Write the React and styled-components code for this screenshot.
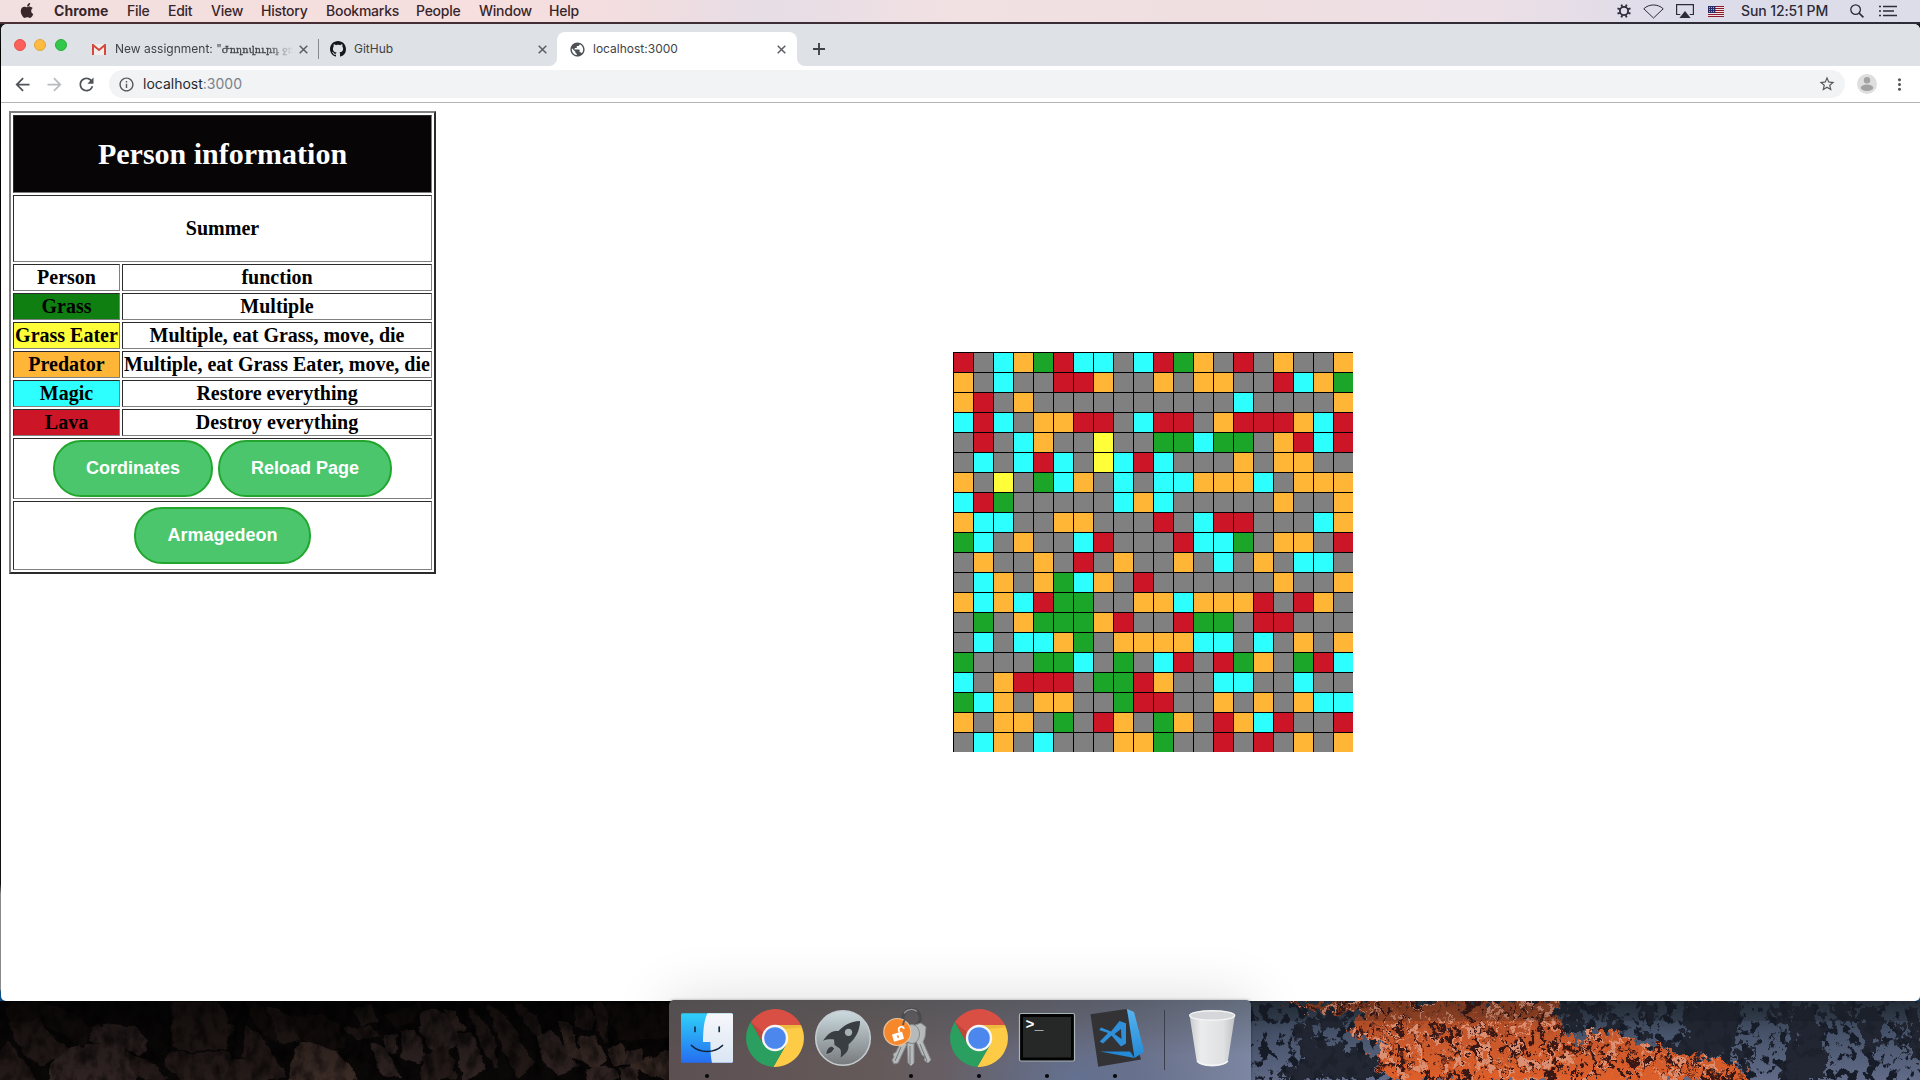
import React from "react";
import styled, { createGlobalStyle } from "styled-components";
import { FaApple } from "react-icons/fa";
import {
  MdArrowBack,
  MdArrowForward,
  MdInfoOutline,
  MdMoreVert,
  MdPublic,
  MdRefresh,
  MdStarBorder,
} from "react-icons/md";

const GlobalStyle = createGlobalStyle`
  * { box-sizing: border-box; }
  body { margin: 0; background: #050404; overflow: hidden; }
`;

const Desktop = styled.div`
  width: 1920px;
  height: 1080px;
  display: flex;
  flex-direction: column;
  position: relative;
  background: linear-gradient(90deg, #4a3035, #3a2c34 50%, #2a2c38);
  font-family: Inter, Roboto, "Liberation Sans", sans-serif;
`;

/* ---------- macOS menu bar ---------- */

const MenuBar = styled.header`
  height: 22px;
  flex: none;
  display: flex;
  align-items: center;
  justify-content: space-between;
  background: linear-gradient(90deg, #f2dfdf 0%, #f6dfde 25%, #f2dde0 33%, #e6dde5 40%, #f2e1e3 50%, #f0dfe0 62%, #ecdfe6 78%, #dcdcea 88%, #dcdde9 100%);
  color: #38262b;
`;

const MenuGroup = styled.nav`
  display: flex;
  align-items: center;
  height: 22px;
`;

const AppleMark = styled(FaApple)`
  width: 14px;
  height: 17px;
  margin: 0 20px 2px 20px;
`;

const MenuItem = styled.span`
  width: ${(p) => p.$width}px;
  font-size: 14px;
  line-height: 22px;
  font-weight: ${(p) => (p.$bold ? 700 : 500)};
  letter-spacing: ${(p) => (p.$bold ? 0.05 : -0.25)}px;
  white-space: nowrap;
`;

const StatusIcon = styled.svg`
  width: ${(p) => p.$w}px;
  height: ${(p) => p.$h}px;
  margin-right: ${(p) => p.$gap}px;
  flex: none;
  color: #2e2a38;
`;

const Clock = styled.span`
  width: 109px;
  font-size: 14px;
  font-weight: 500;
  letter-spacing: -0.1px;
  line-height: 22px;
  white-space: nowrap;
  color: #2e2a36;
`;

/* ---------- browser window ---------- */

const BrowserFrame = styled.div`
  margin-top: 2px;
  padding-left: 1px;
  height: 977px;
  flex: none;
  background: linear-gradient(#17171a 0, #000 30px, #101010 860px, #8a8a8a 870px, #8a8a8a 965px, #0d4d80 968px);
`;

const BrowserWindow = styled.div`
  height: 977px;
  display: flex;
  flex-direction: column;
  background: #fff;
  border-radius: 6px 6px 5px 5px;
  overflow: hidden;
`;

const TabStrip = styled.div`
  height: 42px;
  flex: none;
  display: flex;
  align-items: flex-end;
  background: #dee1e6;
`;

const TrafficLights = styled.div`
  display: flex;
  gap: 8.4px;
  width: 80px;
  padding: 0 0 15px 13px;
`;

const Light = styled.span`
  width: 12px;
  height: 12px;
  flex: none;
  border-radius: 50%;
  background: ${(p) => p.$color};
  border: 1px solid ${(p) => p.$edge};
`;

const Tab = styled.div`
  position: relative;
  width: ${(p) => p.$width}px;
  height: 34px;
  flex: none;
  display: flex;
  align-items: center;
  padding: 0 ${(p) => p.$end}px 0 ${(p) => p.$start}px;
  color: #3f4347;
  background: ${(p) => (p.$active ? "#fff" : "transparent")};
  border-radius: 8px 8px 0 0;
  &::before, &::after {
    content: "";
    display: ${(p) => (p.$active ? "block" : "none")};
    position: absolute;
    bottom: 0;
    width: 8px;
    height: 8px;
  }
  &::before {
    left: -8px;
    background: radial-gradient(circle at 0 0, transparent 7.5px, #fff 8.5px);
  }
  &::after {
    right: -8px;
    background: radial-gradient(circle at 100% 0, transparent 7.5px, #fff 8.5px);
  }
`;

const Favicon = styled.span`
  display: flex;
  width: ${(p) => p.$width}px;
  flex: none;
`;

const TabTitle = styled.span`
  flex: 1;
  overflow: hidden;
  white-space: nowrap;
  font-size: 12px;
  line-height: 18px;
  mask-image: ${(p) => (p.$fade ? "linear-gradient(90deg, #000 152px, transparent 178px)" : "none")};
`;

const Armenian = styled.span`
  font-family: "DejaVu Serif", serif;
  font-size: 9.5px;
  letter-spacing: 0.2px;
  -webkit-text-stroke: 0.3px #3f4347;
`;

const CloseIcon = styled.svg`
  width: 9px;
  height: 9px;
  flex: none;
`;

const TabDivider = styled.span`
  width: 1px;
  height: 20px;
  margin-bottom: 7px;
  flex: none;
  background: #86898d;
`;

const NewTab = styled.svg`
  width: 12px;
  height: 12px;
  margin: 0 0 11px 16px;
`;

const Toolbar = styled.div`
  height: 37px;
  flex: none;
  display: flex;
  align-items: center;
  background: #fff;
  border-bottom: 1px solid #b4b4b4;
  color: #55585c;
`;

const NavGroup = styled.div`
  display: flex;
  width: 103px;
  padding-left: 5px;
`;

const NavButton = styled.span`
  display: flex;
  width: 32px;
  justify-content: center;
  color: ${(p) => (p.$disabled ? "#b9bbbd" : "#505357")};
`;

const AddressBar = styled.div`
  width: 1736px;
  height: 28px;
  margin-left: 5px;
  padding: 0 9px 0 9px;
  display: flex;
  align-items: center;
  border-radius: 14px;
  background: #f1f3f4;
`;

const Address = styled.span`
  flex: 1;
  margin-left: 8px;
  font-size: 14px;
  line-height: 20px;
  color: #27292c;
`;

const Port = styled.span`
  color: #7b828c;
`;

const Avatar = styled.svg`
  width: 20px;
  height: 20px;
  margin: 0 13px 0 12px;
`;

/* ---------- page ---------- */

const Page = styled.main`
  flex: 1;
  display: flex;
  align-items: flex-start;
  padding: 8px;
`;

const InfoTable = styled.table`
  width: 427px;
  flex: none;
  border: 2px solid;
  border-color: #808080 #2b2b2b #2b2b2b #808080;
  border-spacing: 2px;
  border-collapse: separate;
  font-family: "Liberation Serif", "Times New Roman", serif;
  font-size: 20px;
  font-weight: 700;
  line-height: 23px;
  text-align: center;
  color: #000;
`;

const Cell = styled.td`
  width: ${(p) => p.$width ?? "auto"};
  height: ${(p) => p.$height ?? 27}px;
  padding: 1px;
  border: 1px solid;
  border-color: #2b2b2b #808080 #808080 #2b2b2b;
  background: ${(p) => p.$fill ?? "#fff"};
  white-space: nowrap;
`;

const Title = styled.h1`
  margin: 20px 0;
  font-size: 30px;
  line-height: 34px;
  color: #fff;
`;

const Season = styled.p`
  margin: 20px 0;
`;

const ButtonRow = styled.div`
  display: flex;
  justify-content: center;
  gap: 5px;
`;

const PillButton = styled.button`
  width: ${(p) => p.$width}px;
  height: 57px;
  padding: 0;
  border: 2px solid #22a62e;
  border-radius: 28px;
  background: #4bc66d;
  color: #fff;
  font: 700 18px/21px "Liberation Sans", Arial, sans-serif;
`;

const Board = styled.div`
  display: grid;
  grid-template-columns: repeat(20, 20px);
  grid-auto-rows: 20px;
  margin: 241px 0 0 517px;
`;

const Square = styled.span`
  border-left: 1px solid #000;
  border-top: 1px solid #000;
  background: ${(p) => p.$fill};
`;

/* ---------- wallpaper + dock ---------- */

const Wallpaper = styled.footer`
  height: 79px;
  display: flex;
  justify-content: space-between;
  background: #0a0808;
`;

const Scenery = styled.svg`
  display: block;
  width: 680px;
  height: 79px;
`;

const Dock = styled.div`
  position: absolute;
  left: 669px;
  bottom: 0;
  width: 582px;
  height: 80px;
  padding-left: 4px;
  display: flex;
  border-radius: 5px 5px 0 0;
  background: radial-gradient(ellipse 130px 60px at 410px 100%, rgba(95, 118, 158, 0.6), transparent),
    linear-gradient(180deg, rgba(70, 76, 78, 0.45), rgba(90, 80, 80, 0) 70%),
    linear-gradient(90deg, #5c5052 0%, #655a5a 35%, #686470 60%, #6b6f86 80%, #7c87a3 100%);
  box-shadow: 0 0 3px rgba(0, 0, 0, 0.35), 0 0 60px rgba(0, 0, 0, 0.14);
`;

const DockItem = styled.svg`
  width: 68px;
  height: 80px;
  flex: none;
  margin-left: ${(p) => p.$gap ?? 0}px;
`;

const DockSeparator = styled.span`
  width: 1px;
  height: 60px;
  margin: 10px 0 0 15px;
  background: #3c3f4c;
`;

const MENU = [
  ["File", 41],
  ["Edit", 43],
  ["View", 50],
  ["History", 65],
  ["Bookmarks", 90],
  ["People", 63],
  ["Window", 70],
  ["Help", 40],
];

const PERSONS = [
  ["Person", "function", "#fff"],
  ["Grass", "Multiple", "#107f12"],
  ["Grass Eater", "Multiple, eat Grass, move, die", "#fffe38"],
  ["Predator", "Multiple, eat Grass Eater, move, die", "#ffb636"],
  ["Magic", "Restore everything", "#2dffff"],
  ["Lava", "Destroy everything", "#cc1627"],
];

const COLORS = { ".": "#808080", G: "#1ba529", Y: "#fffe38", O: "#ffb636", C: "#2dffff", R: "#cc1627" };

const BOARD = [
  "R.COGRCC.CRGO.R.O..O",
  "O.C..RRO..O.OO..RCOG",
  "OR.O..........C....O",
  "CRC.OORR.CRR.ORRROCR",
  ".R.CO..Y..GGCGG.ORCR",
  ".C.CRC.YCRC...O.OO..",
  "O.Y.GCO.C.CCOOOC.OOO",
  "CRG.....COC.....O..O",
  "OCC..OO...R.CRR...CO",
  "GC.O..CR...RCCG.OO.R",
  ".O..O.R.O..O.C.O.CC.",
  ".CO.OGCO.R......O..O",
  "OCOCRGG..OOCOOOR.RO.",
  ".G.OGGGOR..RGG.RR...",
  ".C.CCOG.OOOOCC.C.O.O",
  "G...GGC.G.CR.RGO.GRC",
  "C.ORRR.GGRO..CC..C..",
  "GCO.OO..GRR..O.O.OCC",
  "O.OO.G.RO.GO.ROCR..R",
  ".CO.C...OOG..R.R.O.O",
];

const ROCKS = [
  ["20,130 90,120 110,165 160,210 90,260 60,220", 1],
  ["20,72 80,68 92,112 40,124 18,110", 0],
  ["210,145 250,135 310,145 335,185 325,220 290,205 215,180", 2],
  ["120,265 150,215 200,195 260,195 298,225 310,300 120,300", 2],
  ["400,70 500,70 530,140 520,205 405,210 400,150", 1],
  ["390,225 525,220 540,300 420,300 385,260", 1],
  ["530,245 565,240 590,300 545,300", 1],
  ["570,140 600,170 655,290 600,300 565,230", 1],
  ["570,70 610,90 640,180 610,160", 0],
  ["620,80 660,110 690,180 650,185", 1],
  ["670,115 740,108 780,140 790,200 750,210 690,170", 0],
  ["690,190 740,195 800,250 820,300 670,300", 3],
  ["800,145 850,145 870,165 830,175", 1],
  ["820,90 850,78 865,120 835,135", 1],
  ["860,190 885,205 920,290 880,280", 2],
  ["888,168 912,172 910,220 895,210", 2],
  ["890,110 950,80 965,70 960,100 920,140", 0],
  ["930,155 955,150 975,220 960,250 930,235", 2],
  ["975,100 1010,85 1050,140 1055,190 1010,230 975,160", 2],
  ["975,230 1030,200 1050,290 980,300", 1],
  ["1030,90 1045,100 1068,145 1050,140", 3],
  ["1060,160 1085,165 1115,260 1070,300 1060,220", 2],
  ["1085,90 1130,150 1145,260 1115,200", 1],
  ["1130,80 1170,120 1230,250 1200,290 1150,170", 1],
  ["1190,70 1235,110 1245,170 1210,130", 1],
  ["1240,170 1270,150 1330,260 1290,280 1250,240", 2],
  ["1295,130 1315,140 1335,240 1310,220", 3],
  ["1325,85 1350,75 1368,110 1360,150 1330,140", 1],
  ["1375,70 1400,80 1395,180 1380,150", 1],
  ["1340,175 1365,170 1395,230 1370,260 1340,240", 3],
  ["1350,275 1390,255 1420,290 1400,300 1355,300", 2],
  ["1410,210 1435,195 1442,250 1415,255", 3],
  ["1447,210 1478,215 1475,255 1450,250", 2],
  ["1430,270 1460,262 1470,300 1435,300", 2],
  ["1460,260 1540,215 1540,300 1495,280", 3],
  ["1400,75 1550,75 1550,170 1430,180", 0],
  ["300,225 350,250 385,300 310,290", 1],
  ["90,70 160,100 210,150 190,200 110,130", 0],
  ["20,190 62,262 78,300 0,300 0,230", 1],
];
const ROCK_TONES = ["#17100f", "#251b19", "#302423", "#3a2b26"];

const DARK_CLIFFS = [
  "130,125 165,120 180,150 165,225 135,225",
  "170,100 235,95 245,135 210,150 180,130",
  "180,180 240,190 310,240 330,300 90,300 120,260",
  "735,75 790,85 790,150 760,150",
  "815,80 835,75 840,130 820,125",
  "845,75 870,90 862,170 850,150",
  "930,75 955,75 935,130 915,120",
  "1030,66 1150,66 1155,130 1130,250 1050,200 1020,130",
  "1215,90 1270,70 1270,115 1240,125",
  "1275,75 1330,75 1345,160 1360,300 1240,300 1270,180",
  "1350,70 1410,70 1420,140 1380,120",
  "1430,80 1480,75 1490,130 1460,240 1430,180",
  "1515,130 1530,120 1530,240 1518,200",
  "1545,80 1568,80 1568,250 1545,230",
  "1225,175 1232,175 1232,215 1222,205",
  "1145,220 1170,215 1165,265 1150,255",
  "1175,195 1188,200 1190,255 1180,250",
  "960,190 1050,180 1100,240 1140,240 1000,220",
  "920,155 960,150 955,175 920,172",
];

const Cross = () => (
  <CloseIcon viewBox="0 0 9 9" stroke="#5b5f63" strokeWidth="1.5">
    <path d="M.7.7l7.6 7.6M8.3.7L.7 8.3" />
  </CloseIcon>
);

const GitHubMark = () => (
  <svg width="16" height="16" viewBox="0 0 16 16" fill="#16191c">
    <path d="M8 0C3.58 0 0 3.58 0 8c0 3.54 2.29 6.53 5.47 7.59.4.07.55-.17.55-.38 0-.19-.01-.82-.01-1.49-2.01.37-2.53-.49-2.69-.94-.09-.23-.48-.94-.82-1.13-.28-.15-.68-.52-.01-.53.63-.01 1.08.58 1.23.82.72 1.21 1.87.87 2.33.66.07-.52.28-.87.51-1.07-1.78-.2-3.64-.89-3.64-3.95 0-.87.31-1.59.82-2.15-.08-.2-.36-1.02.08-2.12 0 0 .67-.21 2.2.82.64-.18 1.32-.27 2-.27.68 0 1.36.09 2 .27 1.53-1.04 2.2-.82 2.2-.82.44 1.1.16 1.92.08 2.12.51.56.82 1.27.82 2.15 0 3.07-1.87 3.75-3.65 3.95.29.25.54.73.54 1.48 0 1.07-.01 1.93-.01 2.2 0 .21.15.46.55.38A8.013 8.013 0 0016 8c0-4.42-3.58-8-8-8z" />
  </svg>
);

function StatusIcons() {
  return (
    <MenuGroup>
      <StatusIcon $w={14} $h={14} $gap={12} viewBox="-7 -7 14 14" fill="none" stroke="currentColor">
        <circle r="4.1" strokeWidth="1.8" />
        {[0, 45, 90, 135, 180, 225, 270, 315].map((a) => (
          <path key={a} d="M0-4.6V-7" strokeWidth="1.9" transform={`rotate(${a + 22.5})`} />
        ))}
      </StatusIcon>
      <StatusIcon $w={21} $h={15} $gap={12} viewBox="0 0 21 15" fill="none" stroke="currentColor">
        <path d="M.8 4.8C6-.3 15-.3 20.2 4.8L10.5 14z" />
      </StatusIcon>
      <StatusIcon $w={18} $h={14} $gap={14} viewBox="0 0 18 14">
        <path d="M4.3 10.5H.6V.6h16.8v9.9h-3.7" fill="none" stroke="currentColor" strokeWidth="1.2" />
        <path d="M9 7l5.6 7H3.4z" fill="currentColor" />
      </StatusIcon>
      <StatusIcon $w={16} $h={11} $gap={17} viewBox="0 0 16 11">
        <rect width="16" height="11" fill="#f0e4e6" />
        <path d="M0 .5h16M0 2.5h16M0 4.5h16M0 6.5h16M0 8.5h16M0 10.5h16" stroke="#8d1a2c" />
        <rect width="8" height="7" fill="#2a2c68" />
        <path d="M1 1.5h7M1 3.5h7M1 5.5h7" stroke="#c9cade" strokeWidth=".8" strokeDasharray="1 1" />
      </StatusIcon>
      <Clock>Sun 12:51 PM</Clock>
      <StatusIcon $w={14} $h={14} $gap={15} viewBox="0 0 14 14" fill="none" stroke="currentColor">
        <circle cx="5.6" cy="5.6" r="4.8" strokeWidth="1.3" />
        <path d="M9 9l4.4 4.4" strokeWidth="1.7" />
      </StatusIcon>
      <StatusIcon $w={18} $h={12} $gap={23} viewBox="0 0 18 12" stroke="currentColor" strokeWidth="1.7">
        <path d="M0 1.5h2M0 6h2M0 10.5h2M4 1.5h14M4 6h11M4 10.5h14" />
      </StatusIcon>
    </MenuGroup>
  );
}

function RockScenery() {
  return (
    <Scenery viewBox="0 63 1568 237" preserveAspectRatio="none">
      <defs>
        <filter id="grain" x="0" y="0" width="100%" height="100%" colorInterpolationFilters="sRGB">
          <feTurbulence type="fractalNoise" baseFrequency="0.04 0.02" numOctaves="4" seed="8" />
          <feColorMatrix values="0 0 0 0 0  0 0 0 0 0  0 0 0 0 0  2.6 0 0 0 -1" />
        </filter>
        <filter id="erode" x="0" y="0" width="100%" height="100%" colorInterpolationFilters="sRGB">
          <feTurbulence type="fractalNoise" baseFrequency="0.03" numOctaves="3" seed="12" result="n" />
          <feDisplacementMap in="SourceGraphic" in2="n" scale="22" xChannelSelector="R" yChannelSelector="G" />
        </filter>
        <linearGradient id="dusk" x2="0" y2="1">
          <stop offset="0" stopColor="#000" stopOpacity=".55" />
          <stop offset="1" stopColor="#000" stopOpacity="0" />
        </linearGradient>
      </defs>
      <rect y="63" width="1568" height="237" fill="#0b0808" />
      <g filter="url(#erode)">
        {ROCKS.map(([points, tone]) => (
          <polygon key={points} points={points} fill={ROCK_TONES[tone]} stroke={ROCK_TONES[tone]} strokeWidth="9" strokeLinejoin="round" />
        ))}
      </g>
      <rect y="63" width="1568" height="237" filter="url(#grain)" opacity=".55" />
      <rect y="63" width="1568" height="237" fill="url(#dusk)" />
    </Scenery>
  );
}

function MountainScenery() {
  return (
    <Scenery viewBox="0 63 1568 237" preserveAspectRatio="none">
      <defs>
        <linearGradient id="snow" x2="0" y2="1">
          <stop offset="0" stopColor="#28323d" />
          <stop offset=".4" stopColor="#465269" />
          <stop offset="1" stopColor="#616b88" />
        </linearGradient>
        <linearGradient id="ember" x2="0" y2="1">
          <stop offset="0" stopColor="#8b3d1f" />
          <stop offset=".4" stopColor="#c4562b" />
          <stop offset="1" stopColor="#e0602a" />
        </linearGradient>
        <filter id="crag" x="-5%" y="-5%" width="110%" height="110%" colorInterpolationFilters="sRGB">
          <feTurbulence type="fractalNoise" baseFrequency="0.05 0.035" numOctaves="4" seed="3" result="n" />
          <feDisplacementMap in="SourceGraphic" in2="n" scale="75" xChannelSelector="R" yChannelSelector="G" />
        </filter>
        <filter id="trees" x="0" y="0" width="100%" height="100%" colorInterpolationFilters="sRGB">
          <feTurbulence type="fractalNoise" baseFrequency="0.045 0.03" numOctaves="5" seed="21" />
          <feColorMatrix values="0 0 0 0 .09  0 0 0 0 .11  0 0 0 0 .16  14 0 0 0 -7.6" />
        </filter>
        <filter id="char" x="0" y="0" width="100%" height="100%" colorInterpolationFilters="sRGB">
          <feTurbulence type="fractalNoise" baseFrequency="0.05 0.022" numOctaves="5" seed="5" />
          <feColorMatrix values="0 0 0 0 .22  0 0 0 0 .09  0 0 0 0 .08  9 0 0 0 -4.8" />
          <feComposite in2="SourceAlpha" operator="in" />
        </filter>
        <filter id="peach" x="0" y="0" width="100%" height="100%" colorInterpolationFilters="sRGB">
          <feTurbulence type="fractalNoise" baseFrequency="0.04 0.03" numOctaves="5" seed="44" />
          <feColorMatrix values="0 0 0 0 .86  0 0 0 0 .56  0 0 0 0 .45  14 0 0 0 -8.2" />
          <feComposite in2="SourceAlpha" operator="in" />
        </filter>
        <path
          id="slope"
          d="M100 63L730 63L745 140L785 210L800 165L825 145L880 170L960 200L1030 225L1140 245L1185 310H390L330 275L300 225L340 200L250 165L280 100L140 85Z"
        />
      </defs>
      <rect y="63" width="1568" height="237" fill="url(#snow)" />
      <rect y="63" width="1568" height="237" filter="url(#trees)" />
      <g fill="#1e222d" filter="url(#crag)" opacity=".92">
        {DARK_CLIFFS.map((points) => (
          <polygon key={points} points={points} />
        ))}
      </g>
      <g filter="url(#crag)">
        <use href="#slope" fill="url(#ember)" />
        <use href="#slope" filter="url(#char)" />
        <use href="#slope" filter="url(#peach)" />
      </g>
      <rect y="63" width="1568" height="60" fill="#10141a" opacity=".2" />
    </Scenery>
  );
}

const RunningDot = () => <circle cx="34" cy="76" r="2.1" fill="#08080a" />;

function FinderIcon() {
  return (
    <DockItem viewBox="0 0 68 80">
      <defs>
        <linearGradient id="finderL" x2="0" y2="1">
          <stop offset="0" stopColor="#2fd0fa" />
          <stop offset="1" stopColor="#256df0" />
        </linearGradient>
        <linearGradient id="finderR" x2="0" y2="1">
          <stop offset="0" stopColor="#f6f7fb" />
          <stop offset="1" stopColor="#dae6f3" />
        </linearGradient>
      </defs>
      <rect x="8" y="13.3" width="52" height="49.5" rx="1.5" fill="url(#finderL)" />
      <path d="M34.5 13.3H58.5Q60 13.3 60 14.8V61.3Q60 62.8 58.5 62.8H39C38 58 37.5 53 37.4 42H30C30.2 30 31 20 34.5 13.3z" fill="url(#finderR)" />
      <path d="M22 27v4.5M46.2 27v4.5" stroke="#17304f" strokeWidth="1.7" strokeLinecap="round" />
      <path d="M18.5 45.5C27 53.5 41 53.5 49.5 45.5" fill="none" stroke="#10233b" strokeWidth="1.7" strokeLinecap="round" />
      <RunningDot />
    </DockItem>
  );
}

function ChromeIcon({ running }) {
  return (
    <DockItem viewBox="0 0 68 80">
      <g transform="translate(34 38)">
        <path d="M0-13H25.9A29 29 0 0 0-24.2-15.9L-11.26 6.5L0 0z" fill="#d94f43" />
        <path d="M25.9-13A29 29 0 0 1-1.7 28.9L11.26 6.5L0-13z" fill="#fecb46" />
        <path d="M-1.7 28.9A29 29 0 0 1-24.2-15.9L-11.26 6.5H11.26z" fill="#2b9f5f" />
        <path d="M-24.2-15.9L-11.26 6.5L-12-6z" fill="#a83e35" opacity=".5" />
        <path d="M0-13H25.9L26.8-10.5L9-9z" fill="#d9a637" opacity=".45" />
        <circle r="13.2" fill="#f6f6f6" />
        <circle r="10.8" fill="#4c87ee" />
      </g>
      {running && <RunningDot />}
    </DockItem>
  );
}

function LaunchpadIcon() {
  return (
    <DockItem viewBox="0 0 68 80">
      <defs>
        <linearGradient id="pad" x2="0" y2="1">
          <stop offset="0" stopColor="#ccdbe0" />
          <stop offset="1" stopColor="#77797b" />
        </linearGradient>
      </defs>
      <circle cx="34" cy="38" r="27.3" fill="url(#pad)" stroke="#c6cdd1" strokeWidth="1.5" />
      <path d="M51 21C41 21.5 34 26 29.5 31C24 30.5 20 32 14 40.7C18 39 22 39 25 39.5L25.5 45L30 48C32 49 32.5 52 31.6 57.5C38 53 40 50 39.5 44.5C46 39 51 31 51 21z" fill="#393e43" />
      <path d="M23 46C19 47 17 50 16.8 54.5C21 54 24 52 25.5 48.5z" fill="#393e43" stroke="#aeb5b8" strokeWidth=".6" />
      <circle cx="39.5" cy="32.3" r="3.6" fill="#a6b1b6" />
    </DockItem>
  );
}

function KeychainIcon() {
  return (
    <DockItem viewBox="0 0 68 80">
      <circle cx="34.5" cy="18" r="8.8" fill="none" stroke="#4b4b4d" strokeWidth="3.2" />
      <path d="M27 13.5a8.8 8.8 0 0 1 13-2" fill="none" stroke="#97989b" strokeWidth="1.2" />
      <g stroke="#85888a" strokeWidth="1" fill="#b7babb">
        <path d="M24 42l6 2l-9 19l-4 1l-2-4l2-3l-1-3l3-2z" />
        <path d="M30 43h7v20l-3 3l-3-3z" />
        <path d="M38 25l6-2l5 4l-1 10l-2 5l8 18l-3 3l-4-3l1-3l-3-2l-7-16l-4-5z" />
        <ellipse cx="35" cy="34" rx="7.5" ry="9.5" />
      </g>
      <path d="M33 46v18M43 44l7 17M24 47l-6 14" stroke="#74787a" strokeWidth="1" fill="none" />
      <circle cx="20.3" cy="32" r="13.5" fill="#f6872b" stroke="#e8c49b" strokeWidth="1.2" />
      <path d="M26 25c0-7 6-6 5-12" stroke="#5a5a5c" strokeWidth="2" fill="none" />
      <g transform="rotate(-16 20 34)">
        <rect x="15" y="33" width="10.5" height="7.5" rx=".8" fill="#fff" />
        <path d="M22.8 33v-3a2.7 2.7 0 0 1 5.2 0v1" fill="none" stroke="#fff" strokeWidth="1.8" />
        <path d="M20.2 35.5v2.6" stroke="#f6872b" strokeWidth="1.5" />
      </g>
      <RunningDot />
    </DockItem>
  );
}

const PromptText = styled.text`
  font: 700 15px "Liberation Mono", "Courier New", monospace;
  fill: #fff;
`;

function TerminalIcon() {
  return (
    <DockItem viewBox="0 0 68 80">
      <rect x="6.5" y="13.5" width="55" height="47.5" rx="1.5" fill="#030303" stroke="#a9b6b8" strokeWidth="1.2" />
      <rect x="10" y="17" width="48" height="40.5" fill="#262727" />
      <PromptText x="12.5" y="29">&gt;_</PromptText>
      <RunningDot />
    </DockItem>
  );
}

function CodeIcon() {
  return (
    <DockItem viewBox="0 0 68 80">
      <defs>
        <linearGradient id="codeBlue" x2="0" y2="1">
          <stop offset="0" stopColor="#55b3ef" />
          <stop offset="1" stopColor="#2489d6" />
        </linearGradient>
      </defs>
      <path d="M9.5 14.3L45.5 9L60 59.5L17.2 66.7z" fill="#333336" />
      <path d="M46 9L53 12L63.3 51.7L53.5 58z" fill="url(#codeBlue)" />
      <path d="M19 51.5L49 51.5L53.5 58z" fill="#2489d6" />
      <path d="M38.5 21L45 23.3V43.5L40 46.5L30.5 35.5L22 43.5L18.7 41.5L27 33L18.3 30L20 27.5L30 31.5zM40 29L33.5 34L40.5 39z" fill="#2f8fd8" fillRule="evenodd" />
      <RunningDot />
    </DockItem>
  );
}

function TrashIcon() {
  return (
    <DockItem $gap={13} viewBox="0 0 68 80">
      <defs>
        <linearGradient id="bin">
          <stop offset="0" stopColor="#c9cacc" />
          <stop offset=".25" stopColor="#ececed" />
          <stop offset=".75" stopColor="#dfe0e2" />
          <stop offset="1" stopColor="#bfc1c5" />
        </linearGradient>
      </defs>
      <path d="M11.5 15L18.5 60C19.5 68.5 49 68.5 50 60L57 15z" fill="url(#bin)" />
      <path d="M19 61C24 66.5 45 66.5 50 61" fill="none" stroke="#f6f6f7" strokeWidth="1.5" />
      <ellipse cx="34.2" cy="15.5" rx="22.5" ry="4.8" fill="#d5d6d9" stroke="#f5f5f6" strokeWidth="1.4" />
    </DockItem>
  );
}

export default function App() {
  return (
    <Desktop>
      <GlobalStyle />
      <MenuBar>
        <MenuGroup>
          <AppleMark />
          <MenuItem $width={73} $bold>Chrome</MenuItem>
          {MENU.map(([label, width]) => (
            <MenuItem key={label} $width={width}>{label}</MenuItem>
          ))}
        </MenuGroup>
        <StatusIcons />
      </MenuBar>

      <BrowserFrame>
        <BrowserWindow>
          <TabStrip>
            <TrafficLights>
              <Light $color="#fc605b" $edge="#e2504b" />
              <Light $color="#fdbc40" $edge="#e0a33a" />
              <Light $color="#34c84a" $edge="#2bac3c" />
            </TrafficLights>
            <Tab $width={237} $start={11} $end={10}>
              <Favicon $width={23}>
                <svg width="14" height="11" viewBox="0 0 14 11">
                  <path d="M1 0h12v11H1z" fill="#f0eded" />
                  <path d="M1 11V1l6 5 6-5v10" fill="none" stroke="#d5483d" strokeWidth="2" />
                </svg>
              </Favicon>
              <TabTitle $fade>
                New assignment: "<Armenian>Ժողովուրդ ջուր</Armenian>
              </TabTitle>
              <Cross />
            </Tab>
            <TabDivider />
            <Tab $width={238} $start={11} $end={10}>
              <Favicon $width={24}>
                <GitHubMark />
              </Favicon>
              <TabTitle>GitHub</TabTitle>
              <Cross />
            </Tab>
            <Tab $width={240} $start={12} $end={11} $active>
              <Favicon $width={24}>
                <MdPublic size={17} color="#4d5155" />
              </Favicon>
              <TabTitle>localhost:3000</TabTitle>
              <Cross />
            </Tab>
            <NewTab viewBox="0 0 12 12" stroke="#3f4347" strokeWidth="1.9">
              <path d="M6 0v12M0 6h12" />
            </NewTab>
          </TabStrip>

          <Toolbar>
            <NavGroup>
              <NavButton><MdArrowBack size={21} /></NavButton>
              <NavButton $disabled><MdArrowForward size={21} /></NavButton>
              <NavButton><MdRefresh size={21} /></NavButton>
            </NavGroup>
            <AddressBar>
              <MdInfoOutline size={17} />
              <Address>localhost<Port>:3000</Port></Address>
              <MdStarBorder size={18} />
            </AddressBar>
            <Avatar viewBox="0 0 20 20">
              <circle cx="10" cy="10" r="10" fill="#dedede" />
              <circle cx="10" cy="6.3" r="3.2" fill="#a2a2a2" />
              <ellipse cx="10" cy="13.8" rx="6.2" ry="3.2" fill="#a2a2a2" />
            </Avatar>
            <MdMoreVert size={19} />
          </Toolbar>

          <Page>
            <InfoTable>
              <tbody>
                <tr>
                  <Cell colSpan={2} $fill="#070506" $height={78}><Title>Person information</Title></Cell>
                </tr>
                <tr>
                  <Cell colSpan={2} $height={67}><Season>Summer</Season></Cell>
                </tr>
                {PERSONS.map(([name, role, fill]) => (
                  <tr key={name}>
                    <Cell $width="107px" $fill={fill}>{name}</Cell>
                    <Cell $width="310px">{role}</Cell>
                  </tr>
                ))}
                <tr>
                  <Cell colSpan={2} $height={61}>
                    <ButtonRow>
                      <PillButton $width={160}>Cordinates</PillButton>
                      <PillButton $width={174}>Reload Page</PillButton>
                    </ButtonRow>
                  </Cell>
                </tr>
                <tr>
                  <Cell colSpan={2} $height={69}>
                    <ButtonRow>
                      <PillButton $width={177}>Armagedeon</PillButton>
                    </ButtonRow>
                  </Cell>
                </tr>
              </tbody>
            </InfoTable>
            <Board>
              {BOARD.flatMap((row, y) =>
                [...row].map((code, x) => <Square key={`${x}-${y}`} $fill={COLORS[code]} />)
              )}
            </Board>
          </Page>
        </BrowserWindow>
      </BrowserFrame>

      <Wallpaper>
        <RockScenery />
        <MountainScenery />
      </Wallpaper>

      <Dock>
        <FinderIcon />
        <ChromeIcon />
        <LaunchpadIcon />
        <KeychainIcon />
        <ChromeIcon running />
        <TerminalIcon />
        <CodeIcon />
        <DockSeparator />
        <TrashIcon />
      </Dock>
    </Desktop>
  );
}
